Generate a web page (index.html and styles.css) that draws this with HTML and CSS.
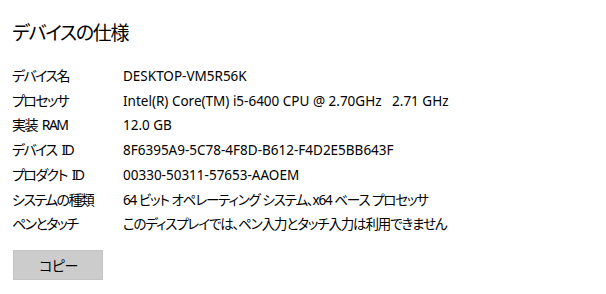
FILE: index.html
```html
<!DOCTYPE html>
<html lang="ja">
<head>
    <meta charset="UTF-8">
    <title>デバイスの仕様</title>
    <link rel="stylesheet" href="styles.css">
</head>
<body>
    <div class="page">
        <h1 class="title">デバイスの仕様</h1>

        <div class="specs">
            <div class="label">デバイス名</div>
            <div class="value">DESKTOP-VM5R56K</div>

            <div class="label">プロセッサ</div>
            <div class="value">Intel(R) Core(TM) i5-6400 CPU @ 2.70GHz&nbsp;&nbsp;&nbsp;2.71 GHz</div>

            <div class="label">実装 RAM</div>
            <div class="value">12.0 GB</div>

            <div class="label">デバイス ID</div>
            <div class="value">8F6395A9-5C78-4F8D-B612-F4D2E5BB643F</div>

            <div class="label">プロダクト ID</div>
            <div class="value">00330-50311-57653-AAOEM</div>

            <div class="label">システムの種類</div>
            <div class="value ja">64 ビット オペレーティング システム、x64 ベース プロセッサ</div>

            <div class="label">ペンとタッチ</div>
            <div class="value ja">このディスプレイでは、ペン入力とタッチ入力は利用できません</div>
        </div>

        <button class="copy">コピー</button>
    </div>
</body>
</html>
```

FILE: styles.css
```css
body { margin: 0; background: #fff; color: #000; font-family: 'Noto Sans', 'Noto Sans CJK JP', sans-serif; font-feature-settings: "palt"; }
.page { padding: 18px 12px 0 12px; }
.title { margin: 0; font-size: 19px; font-weight: 400; line-height: 30px; letter-spacing: -1.3px; }
.specs { display: grid; grid-template-columns: 111px 1fr; margin-top: 16px; font-size: 14px; line-height: 24.7px; }
.label { letter-spacing: -1.6px; word-spacing: 3px; }
.value { font-size: 13.5px; }
.value.ja { letter-spacing: -1.15px; word-spacing: 0.3px; }
.copy { margin-top: 13px; width: 90px; height: 30px; margin-left: 1px; background: #cccccc; border: 1px solid #c4c4c4; font-family: inherit; font-size: 14px; letter-spacing: -1px; color: #000; padding: 0; }
```
